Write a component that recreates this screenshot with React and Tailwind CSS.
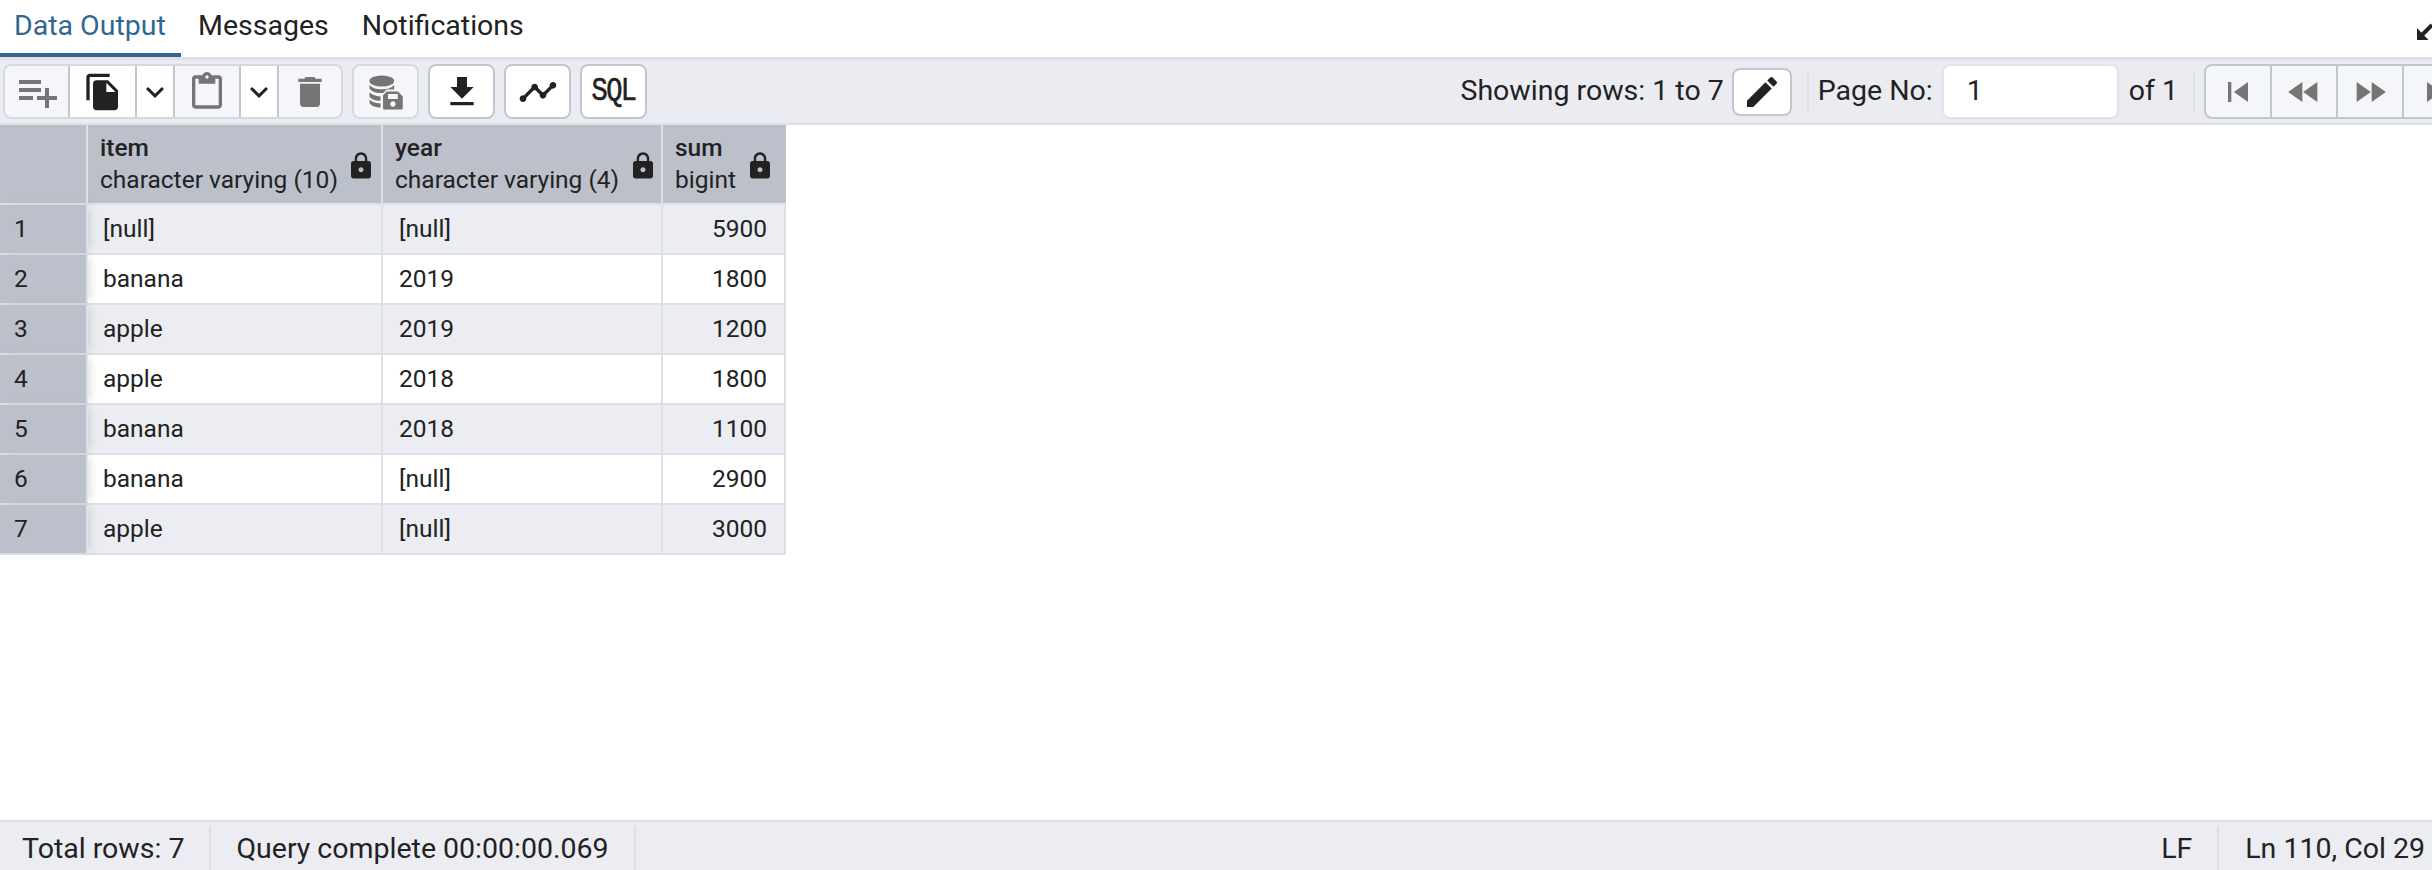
import React from "react";
import {
  MdPlaylistAdd,
  MdFileCopy,
  MdKeyboardArrowDown,
  MdContentPaste,
  MdDelete,
  MdGetApp,
  MdTimeline,
  MdEdit,
  MdSkipPrevious,
  MdFastRewind,
  MdFastForward,
  MdSkipNext,
  MdLock,
} from "react-icons/md";

const rows = [
  ["[null]", "[null]", "5900"],
  ["banana", "2019", "1800"],
  ["apple", "2019", "1200"],
  ["apple", "2018", "1800"],
  ["banana", "2018", "1100"],
  ["banana", "[null]", "2900"],
  ["apple", "[null]", "3000"],
];

const columns = [
  { name: "item", type: "character varying (10)", cell: "w-[295px] pr-[5px]" },
  { name: "year", type: "character varying (4)", cell: "w-[280px] pr-[3px]" },
  { name: "sum", type: "bigint", cell: "w-[123px] pr-[11px]" },
];

// database with the small floppy on it
const SaveDataIcon = () => (
  <svg viewBox="0 0 30 30" className="w-[37px] h-[37px]" fill="#757575">
    <ellipse cx="12" cy="6.5" rx="10" ry="4.5" />
    <path d="M2 9.5c1.5 2.4 5.5 3.7 10 3.7s8.500-1.300 10-3.700v3.800h-6l-3 3h-1c-4.500 0-8.500-1.300-10-3.800z" />
    <path d="M2 15.500c1.500 2.200 5 3.300 9 3.500v3.500c-4.500-.1-7.700-1.300-9-3.500z" />
    <path d="M2 21.500c1.500 2 4.500 3 9 3.200v3.300c-5 0-9-2-9-4.500z" />
    <path
      fillRule="evenodd"
      d="M16 15h9l4 4v9.500a1 1 0 0 1-1 1H14a1 1 0 0 1-1-1V18zM17 17v4h8v-4zM21 23a2.200 2.200 0 1 0 .01 0z"
    />
  </svg>
);

const GroupBtn = ({ active, width = "w-[66px]", last, children }) => (
  <div
    className={`flex items-center justify-center h-full ${width} ${active ? "bg-white" : ""} ${
      last ? "" : "border-r-2 border-[#c2c6d0]"
    }`}
  >
    {children}
  </div>
);

const SingleBtn = ({ active, children }) => (
  <div
    className={`flex items-center justify-center w-[67px] h-[55px] rounded-[8px] border-2 ${
      active ? "bg-white border-[#c2c6d0]" : "bg-[#f5f6f9] border-[#d6d9e0]"
    }`}
  >
    {children}
  </div>
);

const App = () => {
  return (
    <div
      className="w-screen h-screen overflow-hidden flex flex-col bg-white text-[#222222]"
      style={{ fontFamily: "Roboto, sans-serif" }}
    >
      {/* Tabs */}
      <div className="h-[57px] shrink-0 flex items-start justify-between text-[28.5px] leading-[52px]">
        <div className="flex">
          <div className="w-[181px] h-[57px] pl-[14px] text-[#326690] relative">
            Data Output
            <div className="absolute left-0 bottom-0 w-[181px] h-[4px] bg-[#326690]" />
          </div>
          <div className="pl-[17px] pr-[33px]">Messages</div>
          <div>Notifications</div>
        </div>
        <svg viewBox="0 0 15 26" className="w-[15px] h-[26px] mt-[14px]">
          <path d="M0 14V26H11.500z" fill="#222222" />
          <path d="M3 23 15 11" stroke="#222222" strokeWidth="4" />
        </svg>
      </div>

      {/* Toolbar */}
      <div className="h-[68px] shrink-0 flex items-center justify-between pl-[3px] pr-0 bg-[#eaecf1] border-t-[3px] border-b-[2px] border-[#dde0e6]">
        <div className="flex items-center gap-[9px]">
          <div className="flex items-center h-[55px] w-[340px] rounded-[8px] border-2 border-[#d6d9e0] bg-[#f5f6f9] overflow-hidden">
            <GroupBtn width="w-[65px]">
              <MdPlaylistAdd size={48} color="#757575" />
            </GroupBtn>
            <GroupBtn active width="w-[67px]">
              <MdFileCopy size={40} color="#222222" />
            </GroupBtn>
            <GroupBtn active width="w-[38px]">
              <MdKeyboardArrowDown size={36} color="#222222" />
            </GroupBtn>
            <GroupBtn width="w-[66px]">
              <MdContentPaste size={40} color="#757575" />
            </GroupBtn>
            <GroupBtn active width="w-[38px]">
              <MdKeyboardArrowDown size={36} color="#222222" />
            </GroupBtn>
            <GroupBtn last width="w-[62px]">
              <MdDelete size={40} color="#757575" />
            </GroupBtn>
          </div>
          <SingleBtn>
            <SaveDataIcon />
          </SingleBtn>
          <SingleBtn active>
            <MdGetApp size={40} color="#222222" />
          </SingleBtn>
          <SingleBtn active>
            <MdTimeline size={40} color="#222222" />
          </SingleBtn>
          <SingleBtn active>
            <span
              className="text-[27px] leading-none tracking-[-1.5px] scale-y-[1.25] [-webkit-text-stroke:0.5px_#222222]"
              style={{ fontFamily: "'Liberation Mono', monospace" }}
            >
              SQL
            </span>
          </SingleBtn>
        </div>

        <div className="flex items-center text-[28.5px] -mr-[40px]">
          <span>Showing rows: 1 to 7</span>
          <div className="ml-[8px] flex items-center justify-center w-[60px] h-[48px] rounded-[8px] border-2 border-[#c2c6d0] bg-white">
            <MdEdit size={40} color="#222222" />
          </div>
          <div className="ml-[15px] w-[2px] h-[41px] bg-[#dde0e6]" />
          <span className="ml-[9px]">Page No:</span>
          <div className="ml-[9px] w-[177px] h-[55px] pl-[23px] flex items-center rounded-[8px] border-2 border-[#e2e4ea] bg-white">
            1
          </div>
          <span className="ml-[10px]">of 1</span>
          <div className="ml-[15px] w-[2px] h-[41px] bg-[#dde0e6]" />
          <div className="ml-[9px] flex items-center h-[55px] rounded-[8px] border-2 border-[#c2c6d0] bg-[#f5f6f9] overflow-hidden">
            <GroupBtn>
              <MdSkipPrevious size={40} color="#757575" />
            </GroupBtn>
            <GroupBtn>
              <MdFastRewind size={40} color="#757575" />
            </GroupBtn>
            <GroupBtn>
              <MdFastForward size={40} color="#757575" />
            </GroupBtn>
            <GroupBtn last>
              <MdSkipNext size={40} color="#757575" />
            </GroupBtn>
          </div>
        </div>
      </div>

      {/* Data grid */}
      <div className="flex-1 min-h-0 text-[24.5px]">
        <div className="flex w-[786px] h-[80px] bg-[#bcc0cb] border-b-2 border-[#dde0e6]">
          <div className="w-[88px] border-r-2 border-[#dde0e6]" />
          {columns.map((col) => (
            <div
              key={col.name}
              className={`${col.cell} pl-[12px] flex items-center justify-between border-r-2 border-[#dde0e6] last:border-r-0`}
            >
              <div className="leading-[32px] whitespace-nowrap">
                <div className="font-medium">{col.name}</div>
                <div>{col.type}</div>
              </div>
              <MdLock size={30} color="#222222" className="shrink-0 mt-[3px]" />
            </div>
          ))}
        </div>
        {rows.map((row, i) => (
          <div
            key={i}
            className={`flex w-[786px] h-[50px] border-b-2 border-[#dde0e6] leading-[48px] ${
              i % 2 === 0 ? "bg-[#ebedf2]" : "bg-white"
            }`}
          >
            <div className="w-[88px] pl-[14px] bg-[#bcc0cb] border-r-2 border-[#dde0e6] relative z-10 shadow-[5px_0_8px_-3px_rgba(136,136,136,0.3)]">
              {i + 1}
            </div>
            <div className="w-[295px] pl-[15px] border-r-2 border-[#dde0e6]">{row[0]}</div>
            <div className="w-[280px] pl-[16px] border-r-2 border-[#dde0e6]">{row[1]}</div>
            <div className="w-[123px] pr-[17px] text-right border-r-2 border-[#dde0e6]">{row[2]}</div>
          </div>
        ))}
      </div>

      {/* Status bar */}
      <div className="h-[50px] shrink-0 flex items-stretch justify-between pt-[4px] bg-[#ebedf2] border-t-2 border-[#dde0e6] text-[28.5px] leading-[46px]">
        <div className="flex">
          <div className="pl-[22px] pr-[25px] border-r-2 border-[#dde0e6]">Total rows: 7</div>
          <div className="pl-[25px] pr-[25px] border-r-2 border-[#dde0e6]">Query complete 00:00:00.069</div>
        </div>
        <div className="flex">
          <div className="pr-[25px] border-r-2 border-[#dde0e6]">LF</div>
          <div className="pl-[26px] pr-[7px]">Ln 110, Col 29</div>
        </div>
      </div>
    </div>
  );
};

export default App;
